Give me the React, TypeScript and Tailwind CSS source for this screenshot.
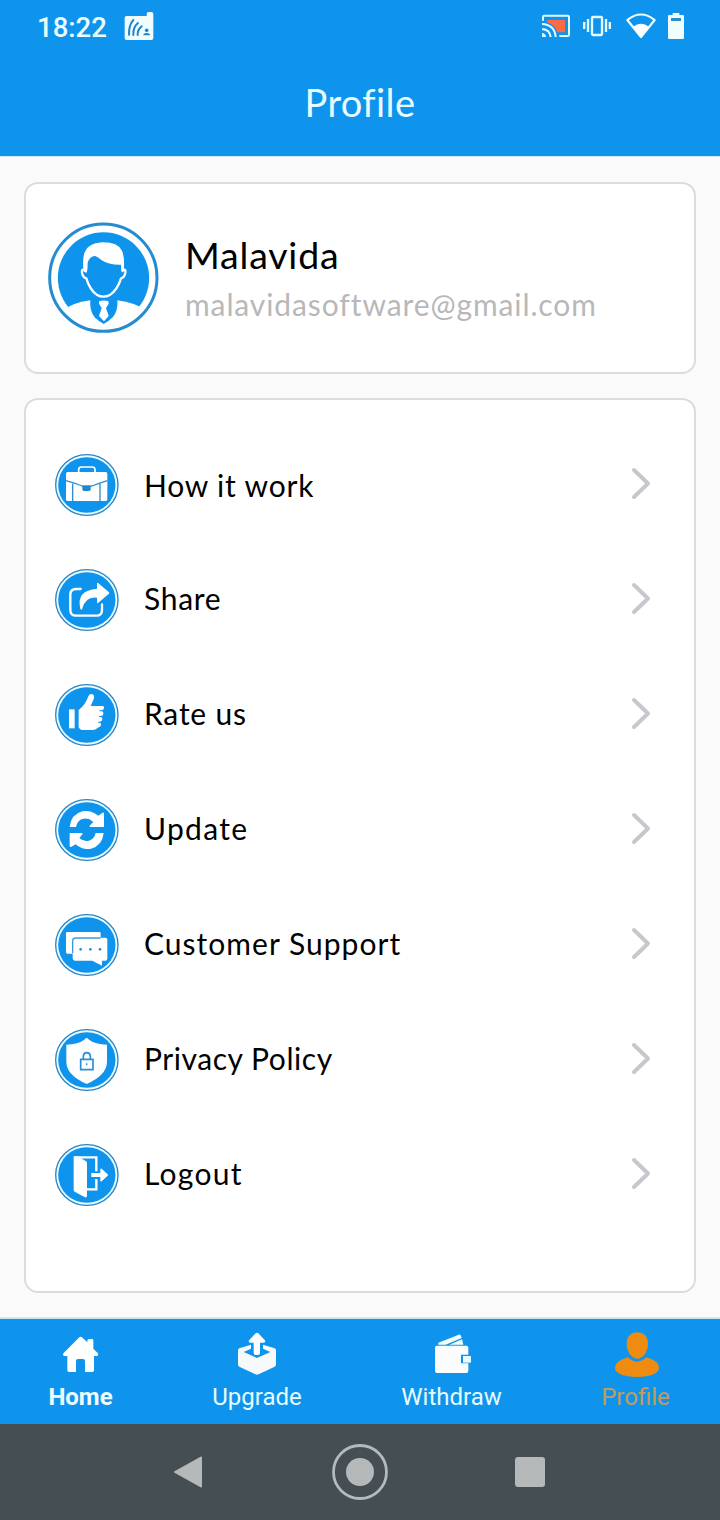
import type { ReactNode } from "react";

const BLUE = "#0f94ed";

function StatusBar() {
  return (
    <div className="flex h-[52px] items-start pl-[37px] pr-[35px] pt-[11px]">
      <span className="mt-[3px] w-[87px] font-[Roboto,sans-serif] text-[27.5px] font-medium leading-none text-[#ecfdff]">
        18:22
      </span>
      <svg className="h-[30px] w-[30px]" viewBox="372 33 90 90">
        <path
          d="M380 48h60v-6q0-6 6-6h8q6 0 6 6v72q0 6-6 6h-74q-6 0-6-6V54q0-6 6-6z"
          fill="#effdff"
        />
        <g fill="none" stroke="#2385c8" strokeWidth="6" strokeLinecap="round">
          <path d="M387 104q-1-28 13-44M400 105q-1-24 14-36M413 105q-1-16 12-26" />
        </g>
        <circle cx="440" cy="91" r="5.5" fill="#2385c8" />
        <path d="M430 106q0-7 10-7t10 7z" fill="#2385c8" />
      </svg>
      <div className="ml-auto flex">
        <svg className="h-[30px] w-[30px]" viewBox="63 33 90 90">
          <path d="M82 60h53v37h-24Q106 73 82 68z" fill="#fb6b45" />
          <g fill="none" stroke="#e3fcff" strokeWidth="6">
            <path d="M69 62V51q0-4 4-4h70q4 0 4 4v53q0 4-4 4h-25" />
            <path d="M66 72q38 2 41 39M66 87q24 2 26 24" />
          </g>
          <path d="M66 99q11 1 12 12H66z" fill="#e3fcff" />
        </svg>
        <svg className="ml-[11px] h-[30px] w-[30px]" viewBox="186 33 90 90">
          <rect x="216" y="51" width="30" height="54" rx="3" fill="none" stroke="#e3fcff" strokeWidth="7" />
          <path d="M204 57v39M192.500 66v21M258 57v39M269.500 66v21" stroke="#e3fcff" strokeWidth="7" />
        </svg>
        <svg className="ml-[13px] h-[30px] w-[32px]" viewBox="315 33 96 90">
          <path d="M322 60Q363 27 404 60L363 111z" fill="none" stroke="#effdff" strokeWidth="6.500" strokeLinejoin="round" />
          <path d="M339 80q24-18 48 0l-24 33z" fill="#fff" />
        </svg>
        <svg className="ml-[10px] h-[30px] w-[18px]" viewBox="441 33 54 90">
          <path d="M444 49q0-4 4-4h10v-6h20v6h10q4 0 4 4v64q0 4-4 4h-40q-4 0-4-4z" fill="#effdff" />
          <path d="M453 54h30v9h-30z" fill="#2f8cc6" />
        </svg>
      </div>
    </div>
  );
}

function Avatar() {
  return (
    <svg className="h-[111px] w-[111px] shrink-0" viewBox="84 156 333 333">
      <defs>
        <clipPath id="avatar-disc">
          <ellipse cx="250.500" cy="324" rx="137" ry="137" />
        </clipPath>
      </defs>
      <ellipse cx="250" cy="323" rx="161" ry="161" fill="#fff" stroke="#258bd2" strokeWidth="9" />
      <g clipPath="url(#avatar-disc)">
        <rect x="110" y="180" width="280" height="235" fill={BLUE} />
        <path d="M100 470v-30Q150 397 211 391h80q60 6 110 44v60H100z" fill="#fff" />
      </g>
      <path d="M211 388h81q3 35-14 54-14 14-27 20-13-6-27-20-16-19-13-54z" fill={BLUE} />
      <path
        d="M193 300q-9-4-7 8 3 15 13 17 10 34 31 49 20 12 41 0 22-16 32-49 10-2 13-17 2-12-7-8z"
        fill={BLUE}
        stroke="#fff"
        strokeWidth="7"
        strokeLinejoin="round"
      />
      <path
        d="M191 305q-5-36 3-58 9-27 52-30 47-1 60 25 9 22 5 63l-8 3H199z"
        fill="#fff"
      />
      <path d="M199 312q5-16 4-34 7-21 23-20 10 4 18 12 22 15 59 14-1 16 4 28z" fill={BLUE} />
      <path d="M238 393q13-3 27 0l1 8-8 13 8 24-14 16-15-16 8-24-8-13z" fill="#fff" />
    </svg>
  );
}

function Badge({ children }: { children: ReactNode }) {
  return (
    <svg className="h-[64px] w-[64px] shrink-0" viewBox="45 39 192 192">
      <ellipse cx="140.500" cy="135" rx="93.500" ry="91" fill="#e9fcff" stroke="#2b86c4" strokeWidth="4" />
      <ellipse cx="140.500" cy="135" rx="86" ry="83.500" fill={BLUE} />
      {children}
    </svg>
  );
}

const briefcase = (
  <>
    <path d="M116 97v-8q0-8 8-8h33q8 0 8 8v8" fill="none" stroke="#fff" strokeWidth="5" />
    <path d="M83 96h114q5 0 5 5v77q0 5-5 5H83q-5 0-5-5v-77q0-5 5-5z" fill="#fff" />
    <path d="M78 122q30 9 48 16h30q18-7 46-16M98 131v52M180 131v52" fill="none" stroke="#2b8fd4" strokeWidth="4" />
    <path d="M127 138h25v10q0 5-5 5h-15q-5 0-5-5z" fill="#1d86d0" />
  </>
);

const share = (
  <>
    <path d="M122 102h-14q-17 0-17 17v46q0 17 17 17h61q17 0 17-17v-17" fill="none" stroke="#fff" strokeWidth="7" strokeLinecap="round" />
    <path d="M171 84q1-2 3 0l33 28q2 2 0 4l-33 28q-3 2-3-2v-14q-36-4-45 35-3 3-5-2-13-55 50-60z" fill="#fff" />
  </>
);

const thumb = (
  <>
    <path d="M87 118h17v57H87z" fill="#fff" />
    <path
      d="M116 120q20-14 29-41 4-9 11-7 9 3 5 16l-9 20h36q6 1 4 6 0 6-7 7h-7v3h8q5 1 4 7 0 7-7 7h-6v3h6q5 1 4 7-1 7-7 7h-6v3h5q5 1 4 6-1 7-7 8l-9 6q-3 2-8 2h-34q-6-1-9-8z"
      fill="#fff"
    />
  </>
);

const refresh = (
  <>
    <path d="M89 126q4-38 38-47 26-5 48 13l13-9q4-1 4 2v41h-42l-2-3 12-12q-15-14-33-9-15 5-19 24z" fill="#fff" />
    <path d="M191 144q-4 38-38 47-26 5-46-13l-14 8q-4 1-4-3v-39h37l2 3-10 12q13 12 29 8 16-5 20-23z" fill="#fff" />
  </>
);

const chat = (
  <g transform="translate(0 1)">
    <path d="M82 95h96q4 0 4 4v28h-82v33H82q-4 0-4-4V99q0-4 4-4z" fill="#fff" />
    <path d="M105 112h91q6 0 6 6v57q0 6-6 6h-10v15l-29-15h-52q-7 0-7-7v-55q0-7 7-7z" fill="#fff" />
    <path d="M182 113h-75q-9 0-9 9v37" fill="none" stroke="#3b99dc" strokeWidth="4" />
    <g fill="#2a8bd0">
      <circle cx="122" cy="147" r="4" />
      <circle cx="151" cy="147" r="4" />
      <circle cx="180" cy="147" r="4" />
    </g>
  </g>
);

const shield = (
  <>
    <path d="M140 69q4 0 7 5 18 14 54 15v53q-2 40-61 65-59-25-61-65V89q36-1 54-15 3-5 7-5z" fill="#fff" />
    <path d="M122 133h37v31h-37zM130 133v-10q1-10 10.500-10t10.500 10v10" fill="none" stroke="#2b8fd8" strokeWidth="5" />
    <path d="M140 145v6" stroke="#2b8fd8" strokeWidth="4" />
  </>
);

const door = (
  <>
    <path d="M105 82h64v42M169 147v31h-30" fill="none" stroke="#fff" strokeWidth="7" />
    <path d="M101 79h12l24 14q4 2 4 6v98q0 7-6 5l-31-17q-3-2-3-6z" fill="#fff" />
    <path d="M154 129h27v-12q1-3 4-1l18 17q2 2 0 4l-18 17q-3 2-4-1v-12h-27z" fill="#fff" />
  </>
);

const rows = [
  { label: "How it work", icon: briefcase, text: "mt-[17px] tracking-[0.8px]" },
  { label: "Share", icon: share, text: "mt-[15px] tracking-[0.7px]" },
  { label: "Rate us", icon: thumb, text: "mt-[15px] tracking-[0.8px]" },
  { label: "Update", icon: refresh, text: "mt-[15px] tracking-[1.3px]" },
  { label: "Customer Support", icon: chat, text: "mt-[15px] tracking-[1.03px]" },
  { label: "Privacy Policy", icon: shield, text: "mt-[15px] tracking-[0.55px]" },
  { label: "Logout", icon: door, text: "mt-[15px] tracking-[1.3px]" },
];

const tabs = [
  {
    label: "Home",
    box: "153 60 180 144",
    style: "w-[65px] font-bold text-[#effdff]",
    icon: (
      <path
        d="M238 82q4-3 8 0l16 15v-5q0-5 5-5h9q4 0 4 4v25l13 13q4 6-2 9h-9v43q0 5-5 5h-22v-33q0-6-6-6h-15q-6 0-6 6v33h-21q-5 0-5-5v-43h-9q-7-3-2-9z"
        fill="#fff"
      />
    ),
  },
  {
    label: "Upgrade",
    box: "680 60 180 144",
    style: "w-[90px] text-[#e6fcff]",
    icon: (
      <>
        <path
          d="M752 104l-35 11q-4 2-4 6v42q0 5 4 7l48 23q5 2 10 0l48-23q4-2 4-7v-42q0-4-4-6l-35-11v12l22 10-40 18-40-18 22-10z"
          fill="#f8f9fb"
        />
        <path d="M766 70q4-3 8 0l19 20q5 7-3 8h-11v31q0 6-6 6h-7q-6 0-6-6V98h-10q-8-1-3-8z" fill="#fff" />
      </>
    ),
  },
  {
    label: "Withdraw",
    box: "183 60 180 144",
    style: "w-[101px] text-[#e6fcff]",
    icon: (
      <>
        <path d="M232 104v-6l61-24q5-1 7 4l2 6-48 20zM265 104l38-16 4 16z" fill="#effdff" />
        <path d="M228 107h88q6 0 6 6v21h-22v26h22v23q0 6-6 6h-88q-6 0-6-6v-70q0-6 6-6z" fill="#fbfcfd" />
        <path d="M306 138h24v20h-24z" fill="#e3fcff" />
      </>
    ),
  },
  {
    label: "Profile",
    box: "735 60 180 144",
    style: "w-[69px] text-[#c59a58]",
    icon: (
      <>
        <path d="M801 142q13 13 27 13t28-13q38 10 38 33-3 24-66 26-62-2-66-26 0-23 39-33z" fill="#ee8b10" />
        <path d="M829 67c19 0 32 13 32 34 0 24-15 45-32 45s-32-21-32-45c0-21 13-34 32-34z" fill="#ee8b10" />
      </>
    ),
  },
];

export default function App() {
  return (
    <div className="flex h-[1520px] w-[720px] flex-col bg-[#fafafa] font-[Lato,sans-serif]">
      <header className="h-[157px] border-b border-[#cdeaf9] bg-[#0f94ed]">
        <StatusBar />
        <h1 className="mt-[31px] text-center text-[38px] leading-none tracking-[0.4px] text-[#e9fcff]">Profile</h1>
      </header>

      <section className="mx-[24px] mt-[25px] flex h-[192px] items-start rounded-[14px] border-2 border-[#dcdcdc] bg-white pl-[22px] pt-[38px]">
        <Avatar />
        <div className="ml-[26px] mt-[14px]">
          <p className="whitespace-nowrap text-[37.5px] leading-none tracking-[0.8px] text-black">Malavida</p>
          <p className="mt-[15px] whitespace-nowrap text-[30px] leading-none tracking-[0.9px] text-[#b8b8b8]">
            malavidasoftware@gmail.com
          </p>
        </div>
      </section>

      <ul className="mx-[24px] mt-[24px] h-[895px] rounded-[14px] border-2 border-[#dcdcdc] bg-white pt-[27px]">
        {rows.map((row) => (
          <li key={row.label} className="flex h-[115px] items-start pl-[29px] pr-[42px] pt-[26px]">
            <Badge>{row.icon}</Badge>
            <span className={`ml-[25px] whitespace-nowrap text-[30px] leading-none text-black ${row.text}`}>
              {row.label}
            </span>
            <svg className="ml-auto mt-[14px] h-[34px] w-[22px]" viewBox="0 0 22 34">
              <path d="M4 3L18 16.500L4 30" fill="none" stroke="#c7c7cd" strokeWidth="4" strokeLinecap="round" strokeLinejoin="round" />
            </svg>
          </li>
        ))}
      </ul>

      <nav className="mt-[24px] flex h-[107px] justify-between border-t-2 border-[#c9e8f8] bg-[#0f94ed] pl-[48px] pr-[50px] pt-[11px] font-[Roboto,sans-serif]">
        {tabs.map((tab) => (
          <div key={tab.label} className={`flex flex-col items-center ${tab.style}`}>
            <svg className="h-[48px] w-[60px]" viewBox={tab.box}>
              {tab.icon}
            </svg>
            <span className="mt-[7px] whitespace-nowrap text-[24px] leading-none">{tab.label}</span>
          </div>
        ))}
      </nav>

      <footer className="flex h-[96px] items-center justify-between bg-[#444e53] pl-[172px] pr-[175px]">
        <svg className="h-[36px] w-[32px]" viewBox="0 0 32 36">
          <path d="M3 18L29 3.500V32.500z" fill="#b5b9ba" stroke="#b5b9ba" strokeWidth="2" strokeLinejoin="round" />
        </svg>
        <svg className="h-[56px] w-[56px]" viewBox="0 0 56 56">
          <circle cx="28" cy="28" r="26.500" fill="none" stroke="#b5b9ba" strokeWidth="2.800" />
          <circle cx="28" cy="28" r="14" fill="#b5b9ba" />
        </svg>
        <div className="h-[30px] w-[30px] rounded-[3px] bg-[#b5b9ba]" />
      </footer>
    </div>
  );
}
